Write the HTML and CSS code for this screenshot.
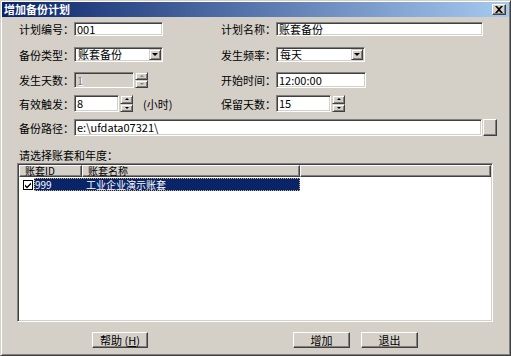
FILE: index.html
```html
<!DOCTYPE html>
<html>
<head>
<meta charset="utf-8">
<link rel="stylesheet" href="styles.css">
</head>
<body>
<div class="window">
  <div class="titlebar">
    <span class="title">增加备份计划</span>
    <span class="close"><svg width="8" height="7" viewBox="0 0 8 7"><path d="M0 0h2l2 2 2-2h2L5 3.5 8 7H6L4 5 2 7H0l3-3.5z" fill="#000"/></svg></span>
  </div>

  <div class="row r1">
    <span class="lbl">计划编号：</span>
    <div class="field w89">001</div>
    <span class="lbl">计划名称：</span>
    <div class="field w207">账套备份</div>
  </div>

  <div class="row r2">
    <span class="lbl">备份类型：</span>
    <div class="select w89"><span class="val">账套备份</span><span class="dd"><i class="down"></i></span></div>
    <span class="lbl">发生频率：</span>
    <div class="select w89"><span class="val">每天</span><span class="dd"><i class="down"></i></span></div>
  </div>

  <div class="row r3">
    <span class="lbl">发生天数：</span>
    <div class="combo">
      <div class="field disabled w60">1</div>
      <div class="spin dis"><span class="sb"><i class="up"></i></span><span class="sb"><i class="down"></i></span></div>
    </div>
    <span class="lbl">开始时间：</span>
    <div class="field w90">12:00:00</div>
  </div>

  <div class="row r4">
    <span class="lbl">有效触发：</span>
    <div class="combo">
      <div class="field w45">8</div>
      <div class="spin"><span class="sb"><i class="up"></i></span><span class="sb"><i class="down"></i></span></div>
      <span class="unit">(小时)</span>
    </div>
    <span class="lbl">保留天数：</span>
    <div class="combo">
      <div class="field w55">15</div>
      <div class="spin"><span class="sb"><i class="up"></i></span><span class="sb"><i class="down"></i></span></div>
    </div>
  </div>

  <div class="row r5">
    <span class="lbl">备份路径：</span>
    <div class="pathbox">
      <div class="field wpath">e:\ufdata07321\</div>
      <span class="browse"></span>
    </div>
  </div>

  <div class="listlabel">请选择账套和年度：</div>

  <div class="list">
    <div class="lhead">
      <span class="hc c1">账套ID</span>
      <span class="hc c2">账套名称</span>
      <span class="hc c3"></span>
    </div>
    <div class="lrow">
      <span class="chk"><svg width="8" height="8" viewBox="0 0 8 8"><path d="M1 3.5l2 2L7 1.5v2L3 7.5 1 5.5z" fill="#000"/></svg></span>
      <span class="sel"><span class="sid">999</span><span class="sname">工业企业演示账套</span></span>
    </div>
  </div>

  <div class="buttons">
    <span class="btn help">帮助 (<u>H</u>)</span>
    <span class="btn add">增加</span>
    <span class="btn quit">退出</span>
  </div>
</div>
</body>
</html>
```

FILE: styles.css
```css
* { box-sizing: border-box; }
body {
  margin: 0;
  background: #d4d0c8;
  font-family: "Noto Sans CJK SC", "Liberation Sans", sans-serif;
  font-size: 11px;
  color: #000;
}
.window {
  width: 511px;
  height: 356px;
  background: #d4d0c8;
  border: 1px solid;
  border-color: #d4d0c8 #404040 #404040 #d4d0c8;
  box-shadow: inset 1px 1px #fff, inset -1px -1px #808080;
  padding: 1px;
  display: flex;
  flex-direction: column;
}
.titlebar {
  height: 15px;
  background: linear-gradient(to right, #0a246a, #a6caf0);
  display: flex;
  align-items: center;
  justify-content: space-between;
  padding: 0 3px 0 2px;
  color: #fff;
  font-weight: bold;
  line-height: 15px;
}
.close {
  width: 14px;
  height: 11px;
  background: #d4d0c8;
  border: 1px solid;
  border-color: #fff #404040 #404040 #fff;
  box-shadow: inset -1px -1px #808080;
  display: flex;
  align-items: center;
  justify-content: center;
}
.row {
  display: grid;
  grid-template-columns: 55px 147px 55px auto;
  align-items: center;
  padding-left: 17px;
}
.r1 { margin-top: 5px; height: 14px; }
.r2 { margin-top: 11px; height: 15px; }
.r3 { margin-top: 10px; height: 16px; }
.r4 { margin-top: 7px; height: 17px; }
.r5 { margin-top: 7px; height: 17px; grid-template-columns: 55px auto; }
.lbl { line-height: 12px; white-space: nowrap; }
.field {
  height: 100%;
  background: #fff;
  border: 1px solid;
  border-color: #808080 #fff #fff #808080;
  box-shadow: inset 1px 1px #404040, inset -1px -1px #d4d0c8;
  padding: 0 2px;
  display: flex;
  align-items: center;
  white-space: nowrap;
  line-height: 11px;
}
.field.disabled { background: #d4d0c8; color: #808080; text-shadow: 1px 1px #fff; }
.w89 { width: 89px; }
.w207 { width: 207px; }
.w90 { width: 90px; }
.w60 { width: 60px; }
.w45 { width: 45px; }
.w55 { width: 55px; }
.wpath { width: 408px; }
.select {
  height: 100%;
  background: #fff;
  border: 1px solid;
  border-color: #808080 #fff #fff #808080;
  box-shadow: inset 1px 1px #404040, inset -1px -1px #d4d0c8;
  padding: 1px;
  display: flex;
}
.select .val { flex: 1; padding-left: 2px; line-height: 11px; display: flex; align-items: center; }
.select .dd {
  width: 12px;
  background: #d4d0c8;
  border: 1px solid;
  border-color: #d4d0c8 #404040 #404040 #d4d0c8;
  box-shadow: inset 1px 1px #fff, inset -1px -1px #808080;
  display: flex;
  align-items: center;
  justify-content: center;
}
.combo { display: flex; align-items: stretch; height: 100%; }
.spin {
  width: 13px;
  margin-left: 1px;
  display: flex;
  flex-direction: column;
}
.sb {
  flex: 1;
  background: #d4d0c8;
  border: 1px solid;
  border-color: #d4d0c8 #404040 #404040 #d4d0c8;
  box-shadow: inset 1px 1px #fff, inset -1px -1px #808080;
  display: flex;
  align-items: center;
  justify-content: center;
}
i.up, i.down { display: block; width: 0; height: 0; border-left: 2px solid transparent; border-right: 2px solid transparent; }
i.up { border-bottom: 2px solid #000; }
i.down { border-top: 2px solid #000; }
.select i.down { border-left-width: 3px; border-right-width: 3px; border-top-width: 3px; }
.spin.dis i.up { border-bottom-color: #808080; }
.spin.dis i.down { border-top-color: #808080; }
.unit { margin-left: 10px; align-self: center; line-height: 12px; }
.pathbox { display: flex; height: 100%; }
.browse {
  width: 14px;
  margin-left: 1px;
  background: #d4d0c8;
  border: 1px solid;
  border-color: #fff #404040 #404040 #fff;
  box-shadow: inset -1px -1px #808080;
}
.listlabel { margin-top: 13px; padding-left: 17px; line-height: 12px; height: 12px; }
.list {
  margin: 2px 0 0 15px;
  width: 476px;
  height: 159px;
  background: #fff;
  border: 1px solid;
  border-color: #808080 #fff #fff #808080;
  box-shadow: inset 1px 1px #404040, inset -1px -1px #d4d0c8;
  padding: 1px;
  font-size: 10px;
}
.lhead { display: flex; height: 12px; }
.hc {
  background: #d4d0c8;
  border: 1px solid;
  border-color: #fff #404040 #404040 #fff;
  box-shadow: inset -1px -1px #808080;
  line-height: 10px;
  padding-left: 5px;
  white-space: nowrap;
}
.c1 { width: 63px; }
.c2 { width: 218px; }
.c3 { flex: 1; }
.lrow { display: flex; align-items: center; height: 13px; margin-top: 1px; }
.chk {
  width: 10px;
  height: 10px;
  margin-left: 4px;
  border: 1px solid #000;
  background: #fff;
  display: flex;
  align-items: center;
  justify-content: center;
}
.sel {
  margin-left: 1px;
  width: 266px;
  height: 13px;
  background: #0a246a;
  color: #fff;
  outline: 1px dotted #c8b060;
  outline-offset: -1px;
  display: flex;
  align-items: center;
  line-height: 11px;
}
.sid { width: 52px; padding-left: 1px; }
.buttons { display: flex; margin-top: 10px; height: 16px; padding-left: 90px; }
.btn {
  width: 57px;
  height: 16px;
  background: #d4d0c8;
  border: 1px solid;
  border-color: #fff #404040 #404040 #fff;
  box-shadow: inset -1px -1px #808080;
  display: flex;
  align-items: center;
  justify-content: center;
  line-height: 11px;
}
.help { width: 56px; }
.add { margin-left: 145px; }
.quit { margin-left: 11px; }
```
